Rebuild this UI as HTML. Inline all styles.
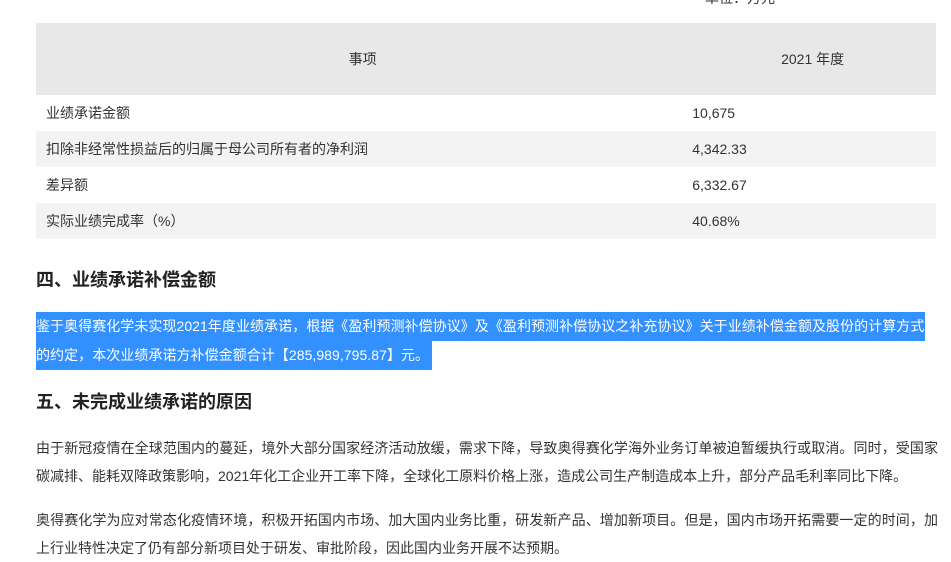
<!DOCTYPE html>
<html><head><meta charset="utf-8"><style>
body{margin:0;background:#fff;font-family:"Liberation Sans","Noto Sans CJK SC",sans-serif;color:#333;width:951px;height:560px;overflow:hidden;position:relative}
.unit{position:absolute;left:705px;top:-10px;font-size:14px;line-height:16px}
table{position:absolute;left:36px;top:23px;width:900px;border-collapse:collapse;font-size:14px}
td{padding:0 0 0 10px;height:36px}
tr.h td{height:72px;background:#e8e8e8;text-align:center;padding:0}
tr.g td{background:#f3f3f3}
td.c2{width:241px;padding-left:3px}
h3{position:absolute;left:36px;margin:0;font-size:18px;font-weight:bold;color:#222;line-height:24px}
.hl{position:absolute;left:36px;font-size:14px;line-height:29px;height:29px;color:#fff;background:#3390ff;white-space:nowrap;overflow:hidden;letter-spacing:0.05px}
p{position:absolute;left:36px;width:902px;margin:0;font-size:14px;line-height:28px;text-align:justify}
</style></head><body>
<div class="unit">单位：万元</div>
<table>
<tr class="h"><td style="width:646px">事项</td><td>2021 年度</td></tr>
<tr><td>业绩承诺金额</td><td class="c2">10,675</td></tr>
<tr class="g"><td>扣除非经常性损益后的归属于母公司所有者的净利润</td><td class="c2">4,342.33</td></tr>
<tr><td>差异额</td><td class="c2">6,332.67</td></tr>
<tr class="g"><td>实际业绩完成率（%）</td><td class="c2">40.68%</td></tr>
</table>
<h3 style="top:268px">四、业绩承诺补偿金额</h3>
<div class="hl" style="top:312px;width:889px">鉴于奥得赛化学未实现2021年度业绩承诺，根据《盈利预测补偿协议》及《盈利预测补偿协议之补充协议》关于业绩补偿金额及股份的计算方式</div>
<div class="hl" style="top:341px;width:396px">的约定，本次业绩承诺方补偿金额合计【285,989,795.87】元。</div>
<h3 style="top:390px">五、未完成业绩承诺的原因</h3>
<p style="top:434px">由于新冠疫情在全球范围内的蔓延，境外大部分国家经济活动放缓，需求下降，导致奥得赛化学海外业务订单被迫暂缓执行或取消。同时，受国家碳减排、能耗双降政策影响，2021年化工企业开工率下降，全球化工原料价格上涨，造成公司生产制造成本上升，部分产品毛利率同比下降。</p>
<p style="top:506px">奥得赛化学为应对常态化疫情环境，积极开拓国内市场、加大国内业务比重，研发新产品、增加新项目。但是，国内市场开拓需要一定的时间，加上行业特性决定了仍有部分新项目处于研发、审批阶段，因此国内业务开展不达预期。</p>
</body></html>
